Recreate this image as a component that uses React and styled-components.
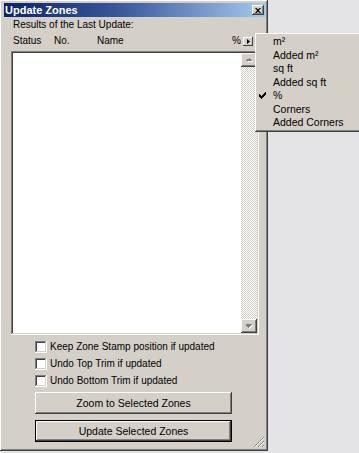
import React from 'react'
import styled, { createGlobalStyle } from 'styled-components'

const Global = createGlobalStyle`
	html, body {
		margin: 0;
		padding: 0;
		background: #e4e3e6;
	}
	body {
		font-family: "Liberation Sans", Arial, sans-serif;
		font-size: 10px;
		color: #000;
	}
`

const raised = `
	box-shadow: inset -1px -1px #404040, inset 1px 1px #ffffff,
		inset -2px -2px #808080, inset 2px 2px #d4d0c8;
`

const sunken = `
	box-shadow: inset -1px -1px #ffffff, inset 1px 1px #808080,
		inset -2px -2px #d4d0c8, inset 2px 2px #404040;
`

const Page = styled.div`
	position: relative;
	width: 359px;
	height: 453px;
	overflow: hidden;
`

const Window = styled.div`
	box-sizing: border-box;
	width: 268px;
	height: 451px;
	padding: 3px 2px 2px 4px;
	background: #d4d0c8;
	${raised}
	display: flex;
	flex-direction: column;
`

const TitleBar = styled.div`
	height: 14px;
	display: flex;
	align-items: center;
	justify-content: space-between;
	padding: 0 2px 0 1px;
	background: linear-gradient(90deg, #0a246a 0%, #3a5a9c 45%, #a6caf0 100%);
	color: #fff;
	font-weight: bold;
	font-size: 11px;
`

const CloseButton = styled.div`
	box-sizing: border-box;
	width: 12px;
	height: 10px;
	background: #d4d0c8;
	${raised}
	display: flex;
	align-items: center;
	justify-content: center;
`

const Body = styled.div`
	flex: 1;
	display: flex;
	flex-direction: column;
	padding: 2px 7px 0 7px;
	position: relative;
`

const Label = styled.div`
	line-height: 12px;
	padding-left: 2px;
`

const Header = styled.div`
	display: grid;
	grid-template-columns: 41px 43px 1fr auto auto;
	align-items: center;
	column-gap: 0;
	height: 12px;
	margin-top: 4px;
	padding: 0 6px 0 2px;
	line-height: 12px;
`

const Percent = styled.span`
	margin-right: 2px;
`

const MiniButton = styled.div`
	box-sizing: border-box;
	width: 10px;
	height: 9px;
	background: #d4d0c8;
	box-shadow: inset -1px -1px #404040, inset 1px 1px #ffffff;
	display: flex;
	align-items: center;
	justify-content: center;
`

const ListBox = styled.div`
	box-sizing: border-box;
	margin-top: 4px;
	width: 248px;
	height: 284px;
	padding: 2px;
	background: #fff;
	${sunken}
	display: flex;
	justify-content: flex-end;
`

const ScrollBar = styled.div`
	width: 16px;
	display: flex;
	flex-direction: column;
	background-color: #d4d0c8;
	background-image: conic-gradient(#ffffff 25%, #d4d0c8 0 50%, #ffffff 0 75%, #d4d0c8 0);
	background-size: 2px 2px;
`

const ScrollArrow = styled.div`
	box-sizing: border-box;
	width: 16px;
	height: 14px;
	background: #d4d0c8;
	${raised}
	display: flex;
	align-items: center;
	justify-content: center;
`

const Track = styled.div`
	flex: 1;
`

const Options = styled.div`
	display: flex;
	flex-direction: column;
	gap: 4px;
	margin: 5px 0 0 24px;
`

const CheckRow = styled.label`
	display: flex;
	align-items: center;
	gap: 3px;
	height: 13px;
	line-height: 13px;
`

const CheckBox = styled.span`
	box-sizing: border-box;
	width: 12px;
	height: 12px;
	background: #fff;
	${sunken}
`

const Button = styled.div`
	box-sizing: border-box;
	width: 197px;
	height: 22px;
	margin-left: 24px;
	margin-top: ${(p) => p.$gap}px;
	background: #d4d0c8;
	display: flex;
	align-items: center;
	justify-content: center;
	font-size: 10.5px;
	${(p) =>
		p.$default
			? `box-shadow: inset -1px -1px #000, inset 1px 1px #000,
				inset -2px -2px #404040, inset 2px 2px #ffffff,
				inset -3px -3px #808080;`
			: raised}
`

const Grip = styled.div`
	position: absolute;
	right: 1px;
	bottom: 1px;
	width: 12px;
	height: 12px;
`

const Menu = styled.div`
	position: absolute;
	left: 255px;
	top: 33px;
	box-sizing: border-box;
	width: 130px;
	padding: 2px 0;
	background: #d4d0c8;
	${raised}
`

const MenuItem = styled.div`
	position: relative;
	height: 13.5px;
	line-height: 13.5px;
	padding-left: 18px;
	font-size: 10.5px;
`

const Check = styled.svg`
	position: absolute;
	left: 4px;
	top: 3px;
`

const units = ['m²', 'Added m²', 'sq ft', 'Added sq ft', '%', 'Corners', 'Added Corners']

const Arrow = ({ dir }) => (
	<svg width="7" height="5" viewBox="0 0 7 5">
		{dir === 'up' ? (
			<>
				<path d="M4 1h1v1h1v1h1v1H2V3h1V2h1z" fill="#fff" />
				<path d="M3 0h1v1h1v1h1v1H0V2h1V1h2z" fill="#808080" />
			</>
		) : (
			<>
				<path d="M1 1h6v1H6v1H5v1H4v1H3V4H2V3H1z" fill="#fff" />
				<path d="M0 0h6v1H5v1H4v1H3v1H2V3H1V2H0z" fill="#808080" />
			</>
		)}
	</svg>
)

export default function App() {
	return (
		<Page>
			<Global />
			<Window>
				<TitleBar>
					<span>Update Zones</span>
					<CloseButton>
						<svg width="6" height="5" viewBox="0 0 6 5">
							<path d="M0 0h1.5L3 1.5 4.5 0H6L3.8 2.5 6 5H4.5L3 3.5 1.5 5H0l2.2-2.5z" fill="#000" />
						</svg>
					</CloseButton>
				</TitleBar>
				<Body>
					<Label>Results of the Last Update:</Label>
					<Header>
						<span>Status</span>
						<span>No.</span>
						<span>Name</span>
						<Percent>%</Percent>
						<MiniButton>
							<svg width="3" height="5" viewBox="0 0 3 5">
								<path d="M0 0l3 2.5L0 5z" fill="#000" />
							</svg>
						</MiniButton>
					</Header>
					<ListBox>
						<ScrollBar>
							<ScrollArrow>
								<Arrow dir="up" />
							</ScrollArrow>
							<Track />
							<ScrollArrow>
								<Arrow dir="down" />
							</ScrollArrow>
						</ScrollBar>
					</ListBox>
					<Options>
						<CheckRow>
							<CheckBox />
							Keep Zone Stamp position if updated
						</CheckRow>
						<CheckRow>
							<CheckBox />
							Undo Top Trim if updated
						</CheckRow>
						<CheckRow>
							<CheckBox />
							Undo Bottom Trim if updated
						</CheckRow>
					</Options>
					<Button $gap={5}>Zoom to Selected Zones</Button>
					<Button $gap={6} $default>
						Update Selected Zones
					</Button>
					<Grip>
						<svg width="12" height="12" viewBox="0 0 12 12">
							<path d="M11 1L1 11M11 5L5 11M11 9L9 11" stroke="#808080" strokeWidth="1" />
							<path d="M11 2L2 11M11 6L6 11M11 10L10 11" stroke="#ffffff" strokeWidth="1" />
						</svg>
					</Grip>
				</Body>
			</Window>
			<Menu>
				{units.map((u) => (
					<MenuItem key={u}>
						{u === '%' && (
							<Check width="7" height="7" viewBox="0 0 7 7">
								<path d="M0 2h1v1h1v1h1V3h1V2h1V1h1V0h1v3H6v1H5v1H4v1H3v1H2V6H1V5H0z" fill="#000" />
							</Check>
						)}
						{u}
					</MenuItem>
				))}
			</Menu>
		</Page>
	)
}
